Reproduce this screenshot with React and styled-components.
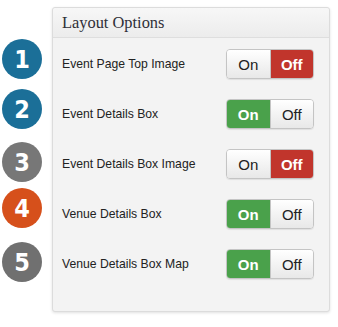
import React from "react";
import styled, { createGlobalStyle } from "styled-components";

const Global = createGlobalStyle`
  html, body { margin: 0; padding: 0; background: #fff; }
  body { width: 338px; height: 327px; overflow: hidden; }
`;

const Page = styled.div`
  display: flex;
  align-items: flex-start;
  padding: 7px 0 0 2px;
`;

const Markers = styled.div`
  display: flex;
  flex-direction: column;
  gap: 10px;
  padding-top: 32px;
  width: 50px;
`;

const Marker = styled.div`
  width: 40px;
  height: 40px;
  border-radius: 50%;
  background: ${(p) => p.$color};
  color: #fff;
  display: flex;
  align-items: center;
  justify-content: center;
  font-family: "DejaVu Sans Condensed", "DejaVu Sans", sans-serif;
  font-weight: bold;
  font-size: 25px;
  line-height: 1;
  transform: translateY(${(p) => p.$dy || 0}px);
`;

const Panel = styled.div`
  width: 278px;
  height: 305px;
  box-sizing: border-box;
  border: 1px solid #dcdcdc;
  border-radius: 3px;
  background: #f3f3f3;
  box-shadow: 0 1px 3px rgba(0, 0, 0, 0.12);
  display: flex;
  flex-direction: column;
`;

const Header = styled.div`
  height: 29px;
  border-bottom: 1px solid #dedede;
  background: linear-gradient(#f7f7f7, #ececec);
  padding-left: 9px;
  display: flex;
  align-items: center;
  font-family: "Liberation Serif", Georgia, serif;
  font-size: 16.4px;
  color: #2f2f38;
  border-radius: 3px 3px 0 0;
`;

const Rows = styled.div`
  display: flex;
  flex-direction: column;
  padding-top: 1px;
`;

const Row = styled.div`
  height: 50px;
  display: flex;
  align-items: center;
  justify-content: space-between;
  padding: 0 15px 0 9px;
`;

const Label = styled.span`
  font-family: "Liberation Sans", Arial, sans-serif;
  font-size: 12.2px;
  color: #222;
`;

const Toggle = styled.div`
  display: flex;
  width: 88px;
  height: 30px;
  box-sizing: border-box;
  border: 1px solid #c4c4c4;
  border-radius: 4px;
  overflow: hidden;
  box-shadow: 0 1px 1px rgba(0, 0, 0, 0.08);
`;

const Seg = styled.div`
  flex: 1;
  display: flex;
  align-items: center;
  justify-content: center;
  font-family: "Liberation Sans", Arial, sans-serif;
  font-size: 15px;
  font-weight: ${(p) => (p.$active ? "bold" : "normal")};
  color: ${(p) => (p.$active ? "#fff" : "#222")};
  background: ${(p) =>
    p.$active ? p.$bg : "linear-gradient(#ffffff, #e8e8e8)"};
  & + & {
    border-left: 1px solid #c4c4c4;
  }
`;

const items = [
  { n: "1", color: "#1b6f98", label: "Event Page Top Image", on: false, dy: 0 },
  { n: "2", color: "#1b6f98", label: "Event Details Box", on: true, dy: 0 },
  { n: "3", color: "#777777", label: "Event Details Box Image", on: false, dy: 3 },
  { n: "4", color: "#d6501b", label: "Venue Details Box", on: true, dy: -1 },
  { n: "5", color: "#707070", label: "Venue Details Box Map", on: true, dy: 3 },
];

export default function App() {
  return (
    <>
      <Global />
      <Page>
        <Markers>
          {items.map((it) => (
            <Marker key={it.n} $color={it.color} $dy={it.dy}>
              {it.n}
            </Marker>
          ))}
        </Markers>
        <Panel>
          <Header>Layout Options</Header>
          <Rows>
            {items.map((it) => (
              <Row key={it.n}>
                <Label>{it.label}</Label>
                <Toggle>
                  <Seg $active={it.on} $bg="#4aa14b">On</Seg>
                  <Seg $active={!it.on} $bg="#c1352c">Off</Seg>
                </Toggle>
              </Row>
            ))}
          </Rows>
        </Panel>
      </Page>
    </>
  );
}
